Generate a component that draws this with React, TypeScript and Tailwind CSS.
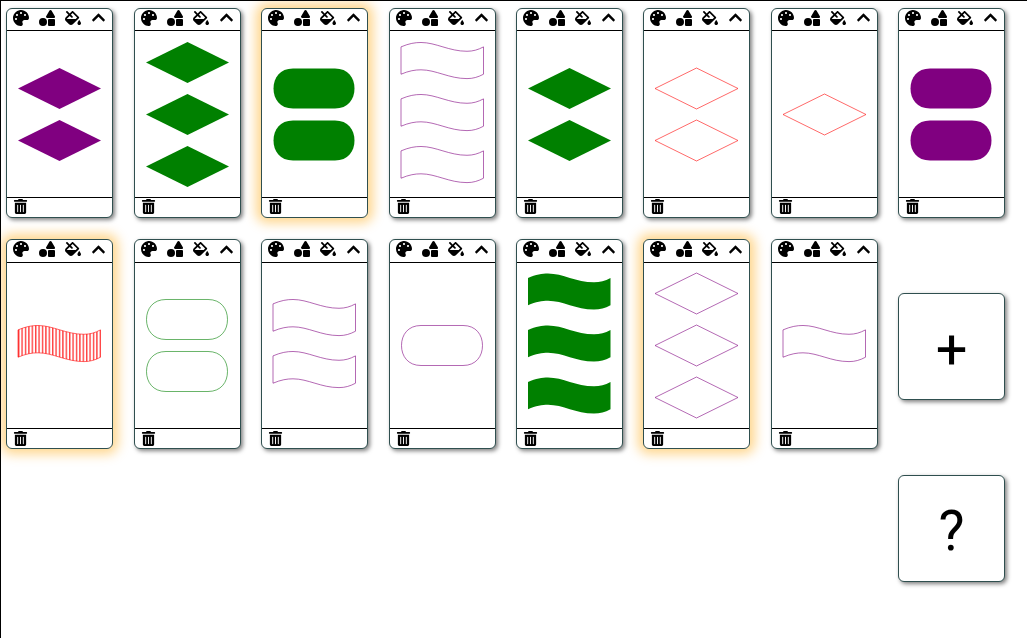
import { FaPalette, FaShapes, FaFillDrip, FaChevronUp, FaTrashAlt } from "react-icons/fa";

type Shape = "diamond" | "oval" | "wave";
type Fill = "solid" | "outline" | "striped";
type CardData = { shape: Shape; count: number; color: string; fill: Fill; selected?: boolean };

const topRow: CardData[] = [
  { shape: "diamond", count: 2, color: "purple", fill: "solid" },
  { shape: "diamond", count: 3, color: "green", fill: "solid" },
  { shape: "oval", count: 2, color: "green", fill: "solid", selected: true },
  { shape: "wave", count: 3, color: "purple", fill: "outline" },
  { shape: "diamond", count: 2, color: "green", fill: "solid" },
  { shape: "diamond", count: 2, color: "red", fill: "outline" },
  { shape: "diamond", count: 1, color: "red", fill: "outline" },
  { shape: "oval", count: 2, color: "purple", fill: "solid" },
];

const bottomRow: CardData[] = [
  { shape: "wave", count: 1, color: "red", fill: "striped", selected: true },
  { shape: "oval", count: 2, color: "green", fill: "outline" },
  { shape: "wave", count: 2, color: "purple", fill: "outline" },
  { shape: "oval", count: 1, color: "purple", fill: "outline" },
  { shape: "wave", count: 3, color: "green", fill: "solid" },
  { shape: "diamond", count: 3, color: "purple", fill: "outline", selected: true },
  { shape: "wave", count: 1, color: "purple", fill: "outline" },
];

const wavePath =
  "M0 5C8 1.5 14 .5 20 .5C35 .5 48 9.5 66 9.5C72 9.5 77 8 82.5 5V33C77 36 72 37.5 66 37.5C48 37.5 35 28.5 20 28.5C14 28.5 8 29.5 0 33Z";
const ovalPath =
  "M20 .5H62C75 .5 81.5 10 81.5 21C81.5 32 75 41.5 62 41.5H20C7 41.5 .5 32 .5 21C.5 10 7 .5 20 .5Z";

function ShapeIcon({ data }: { data: CardData }) {
  const { shape, color, fill } = data;
  const patternId = `stripes-${color}`;
  const paint = fill === "solid" ? color : fill === "striped" ? `url(#${patternId})` : "none";
  const common = { fill: paint, stroke: color, strokeWidth: fill === "solid" ? 0 : 0.6 };

  return (
    <svg
      width="83"
      height="41"
      viewBox="0 0 83 42"
      preserveAspectRatio="none"
      className="block overflow-visible"
    >
      {fill === "striped" && (
        <defs>
          <pattern id={patternId} width="3.4" height="4" patternUnits="userSpaceOnUse">
            <rect width="1.4" height="4" fill={color} fillOpacity="0.75" />
          </pattern>
        </defs>
      )}
      {shape === "diamond" && <polygon points="41.5,0 83,21 41.5,42 0,21" {...common} />}
      {shape === "oval" && <path d={ovalPath} {...common} />}
      {shape === "wave" && <path d={wavePath} {...common} />}
    </svg>
  );
}

function Card({ data }: { data: CardData }) {
  return (
    <div
      className={`flex flex-col h-[210px] w-[107px] rounded-[6px] border border-[#2f4f4f] bg-white ${
        data.selected
          ? "shadow-[0_0_12px_5px_rgba(255,165,0,0.45)]"
          : "shadow-[2px_2px_4px_rgba(0,0,0,0.5)]"
      }`}
    >
      <div className="flex h-[22.5px] shrink-0 items-center gap-[10px] border-b border-black pb-[3px] pl-[6px] text-black">
        <FaPalette size={16} />
        <FaShapes size={16} />
        <FaFillDrip size={16} />
        <FaChevronUp size={15} />
      </div>
      <div className="flex flex-1 flex-col items-center justify-center gap-[11px] pt-[1px]">
        {Array.from({ length: data.count }).map((_, i) => (
          <ShapeIcon key={i} data={data} />
        ))}
      </div>
      <div className="flex h-[20px] shrink-0 items-center border-t border-black pb-[1px] pl-[6px] text-black">
        <FaTrashAlt size={15} />
      </div>
    </div>
  );
}

function SquareButton({ label, className }: { label: string; className?: string }) {
  return (
    <div
      className={`flex h-[107px] w-[107px] items-center justify-center rounded-[6px] border border-[#2f4f4f] bg-white text-black shadow-[2px_2px_4px_rgba(0,0,0,0.5)] ${className ?? ""}`}
    >
      {label}
    </div>
  );
}

export default function App() {
  return (
    <div className="h-[638px] overflow-hidden border-l border-t border-black bg-white pl-[5.4px] pt-[6.6px] font-['Roboto',sans-serif]">
      <div className="grid w-[1019px] grid-cols-8 auto-rows-[231.6px]">
        {topRow.map((card, i) => (
          <Card key={i} data={card} />
        ))}
        {bottomRow.map((card, i) => (
          <Card key={i} data={card} />
        ))}
        <SquareButton label="+" className="mt-[53.5px] pt-[7px] text-[56px]" />
        <div className="col-start-8">
          <SquareButton label="?" className="mt-[4px] pt-[5px] text-[55px]" />
        </div>
      </div>
    </div>
  );
}
